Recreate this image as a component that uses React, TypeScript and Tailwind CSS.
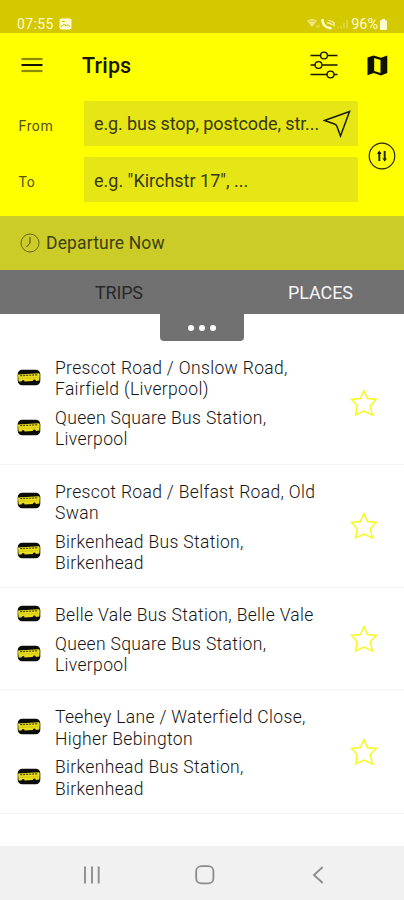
import React from "react";

const trips: { from: string[]; to: string[] }[] = [
  { from: ["Prescot Road / Onslow Road,", "Fairfield (Liverpool)"], to: ["Queen Square Bus Station,", "Liverpool"] },
  { from: ["Prescot Road / Belfast Road, Old", "Swan"], to: ["Birkenhead Bus Station,", "Birkenhead"] },
  { from: ["Belle Vale Bus Station, Belle Vale"], to: ["Queen Square Bus Station,", "Liverpool"] },
  { from: ["Teehey Lane / Waterfield Close,", "Higher Bebington"], to: ["Birkenhead Bus Station,", "Birkenhead"] },
];

function BusIcon() {
  return (
    <svg width="24" height="17" viewBox="0 0 24 17" className="block">
      <rect x="0.7" y="0.7" width="22.6" height="15.6" rx="4.5" fill="#0b0b08" />
      <path d="M1 5.4 L21.6 4.2 Q22.9 4.4 22.7 6 L22.3 11.4 L18.8 11.9 A1.5 1.5 0 0 0 15.8 12 L7.6 12.4 A1.5 1.5 0 0 0 4.6 12.4 L1.6 12.4 Z" fill="#ebdf1c" />
      <path d="M3.2 6.7 L20.5 5.8" stroke="#4a460c" strokeWidth="1.2" strokeDasharray="2 1" />
      <path d="M2.5 9.4 L21.5 8.6" stroke="#b8ad14" strokeWidth="0.5" />
    </svg>
  );
}

function Star() {
  return (
    <svg width="28" height="28" viewBox="0 0 28 28" fill="none" stroke="#f8f81e" strokeWidth="1.5" className="-mt-[3px] block">
      <path d="M14 1.8 L17.5 9.6 L26.2 10.4 L20.2 16.7 L22.4 26 L14 22 L5.6 26 L7.2 16.7 L1.5 10.4 L10.3 9.6 Z" />
    </svg>
  );
}

function Stop({ lines }: { lines: string[] }) {
  return (
    <div className="flex items-center">
      <div className="-mt-[4px] ml-[17px] w-[38px] shrink-0">
        <BusIcon />
      </div>
      <div>
        {lines.map((l) => (
          <div key={l} className="whitespace-nowrap">{l}</div>
        ))}
      </div>
    </div>
  );
}

export default function App() {
  return (
    <div className="flex h-[900px] w-[404px] flex-col overflow-hidden bg-white font-[Roboto,sans-serif]">
      <div className="flex h-[33px] shrink-0 items-end justify-between bg-[#d4c800] pr-[16px] pl-[17px] text-[#fffbd0]">
        <div className="flex h-[18px] items-center gap-[5px]">
          <span className="text-[14px] tracking-[0.35px]">07:55</span>
          <svg width="13" height="12" viewBox="0 0 13 12">
            <rect x="0.5" y="0.5" width="12" height="11" rx="2" fill="#fffbd0" />
            <path d="M2 9 L5 6 L7 8 L9 6.5 L11 9" fill="none" stroke="#d4c800" strokeWidth="1" />
            <path d="M3 3.5 H6" stroke="#d4c800" strokeWidth="1" />
          </svg>
        </div>
        <div className="flex h-[18px] items-center">
          <svg width="46" height="14" viewBox="0 0 46 14" fill="none">
            <path d="M0 4 Q5 0 10 4 L5 10 Z" fill="#eee58a" />
            <path d="M1.5 5 Q5 2.5 8.5 5" stroke="#d4c800" strokeWidth="0.8" />
            <path d="M10 8 V11 M12 8 V11" stroke="#eee58a" strokeWidth="0.8" />
            <path d="M15.5 3 Q15.8 10 23.5 11.2" stroke="#fffbd0" strokeWidth="2.6" strokeLinecap="round" />
            <path d="M20 6 Q23 5.5 25.5 8 M21.5 3.5 Q25 3.5 27.5 6 M27 5 V9.5" stroke="#fffbd0" strokeWidth="1.1" />
            <path d="M31 11.5 V9.5 M34 11.5 V8.5 M37 11.5 V6 M40 11.5 V3" stroke="#e6dd70" strokeWidth="1" />
          </svg>
          <span className="-ml-[2px] pt-px text-[14.5px] tracking-[-0.05px]">96%</span>
          <svg width="9" height="13" viewBox="0 0 9 13" className="ml-px">
            <path d="M3 1 H6 V2.2 H7 Q8 2.2 8 3.2 V11 Q8 12 7 12 H2 Q1 12 1 11 V3.2 Q1 2.2 2 2.2 H3 Z" fill="#fffbd0" />
          </svg>
        </div>
      </div>

      <div className="h-[183px] shrink-0 bg-[#ffff00]">
        <div className="flex h-[64px] items-center pl-[21px]">
          <svg width="22" height="18" viewBox="0 0 22 18" className="-mt-px">
            <path d="M0.5 3 H21.5" stroke="#8b8b00" strokeWidth="2.2" />
            <path d="M0.5 9 H21.5" stroke="#111100" strokeWidth="2" />
            <path d="M0.5 15 H21.5" stroke="#8b8b00" strokeWidth="2.2" />
          </svg>
          <div className="mt-[2px] ml-[39px] w-[228px] text-[21.5px] font-medium tracking-[0.15px] text-[#171700]">Trips</div>
          <svg width="28" height="28" viewBox="0 0 28 28" fill="none" stroke="#171700" strokeWidth="1.4">
            <path d="M0.5 4.5 H10.5 M17.5 4.5 H27.5 M0.5 14 H5 M12 14 H27.5 M0.5 23.5 H17 M24 23.5 H27.5" />
            <circle cx="14" cy="4.5" r="3.4" />
            <circle cx="8.5" cy="14" r="3.4" />
            <circle cx="20.5" cy="23.5" r="3.4" />
          </svg>
          <svg width="21" height="21" viewBox="0 0 21 21" className="ml-[29px]">
            <path d="M0.5 2.4 L6.7 0.5 L14 2.7 L20.3 0.5 V18 L14 20.5 L6.7 18 L0.5 20.3 Z" fill="#111100" />
            <path d="M7.2 3 L13.5 5 V18 L7.2 16 Z" fill="#ffff00" />
          </svg>
        </div>
        <div className="flex">
          <div className="flex flex-col gap-[11px] pt-[4px]">
            <div className="flex items-center">
              <span className="w-[84px] pt-[6px] pl-[18.5px] text-[14px] tracking-[0.6px] text-[#56560a]">From</span>
              <div className="flex h-[45px] w-[274px] items-center bg-[#e6e617] pl-[10px]">
                <span className="w-[229px] text-[18px] tracking-[-0.1px] whitespace-nowrap text-[#38380a]">e.g. bus stop, postcode, str...</span>
                <svg width="28" height="28" viewBox="0 0 28 28" fill="none" stroke="#1a1a00" strokeWidth="1.5">
                  <path d="M1.5 10.5 L26.5 1.5 L17.5 26 L14 16.5 Q13.5 14.8 11.5 14 Z" />
                </svg>
              </div>
            </div>
            <div className="flex items-center">
              <span className="w-[84px] pt-[6px] pl-[18.5px] text-[14px] tracking-[0.6px] text-[#56560a]">To</span>
              <div className="flex h-[45px] w-[274px] items-center bg-[#e6e617] pl-[10px]">
                <span className="pt-px text-[18px] whitespace-nowrap text-[#38380a]">e.g. "Kirchstr 17", ...</span>
              </div>
            </div>
          </div>
          <svg width="28" height="28" viewBox="0 0 28 28" className="mt-[45px] ml-[10px]" fill="none" stroke="#29290a">
            <circle cx="14" cy="14" r="12.8" strokeWidth="1.2" />
            <path d="M11.3 19 V10" strokeWidth="2" />
            <path d="M9 12 L11.3 8.5 L13.6 12 Z M14.4 16.5 L16.7 19.5 L19 16.5 Z" fill="#111100" stroke="none" />
            <path d="M16.7 9 V18" strokeWidth="2" />
          </svg>
        </div>
      </div>

      <div className="flex h-[54px] shrink-0 items-center bg-[#cccc28] pl-[20px]">
        <svg width="20" height="20" viewBox="0 0 20 20" fill="none" stroke="#66660f" strokeWidth="1">
          <circle cx="10" cy="10" r="9" />
          <path d="M10 4 V10 L6.5 14" stroke="#47470a" />
        </svg>
        <span className="ml-[6px] text-[17.5px] tracking-[0.15px] text-[#3e3e12]">Departure Now</span>
      </div>

      <div className="flex h-[44px] shrink-0 items-center bg-[#717171] text-[18px]">
        <div className="w-[193px] pl-[95px] tracking-[-0.2px] text-[#292929]">TRIPS</div>
        <div className="pl-[95px] tracking-[-0.1px] text-[#f6f6f6]">PLACES</div>
      </div>
      <div className="mx-auto flex h-[27px] w-[84px] shrink-0 items-center justify-center gap-[5px] rounded-b-[4px] bg-[#717171]">
        <span className="size-[6px] rounded-full bg-white" />
        <span className="size-[6px] rounded-full bg-white" />
        <span className="size-[6px] rounded-full bg-white" />
      </div>

      <div className="flex-1 text-[17.5px] leading-[21.25px] font-light tracking-[0.34px] text-[#141414]">
        {trips.map((t, i) => (
          <div key={i} className="flex items-center justify-between border-b border-[#f3f3f3] pt-[17px] pr-[26px] pb-[13px]">
            <div className="flex flex-col gap-[7.5px]">
              <Stop lines={t.from} />
              <Stop lines={t.to} />
            </div>
            <Star />
          </div>
        ))}
      </div>

      <div className="flex h-[54px] shrink-0 items-center bg-[#f1f1f1] pl-[83px]">
        <svg width="18" height="18" viewBox="0 0 18 18" className="mt-[3px]" stroke="#929292" strokeWidth="2">
          <path d="M2 0.5 V17.5 M9 0.5 V17.5 M15.7 0.5 V17.5" />
        </svg>
        <svg width="20" height="20" viewBox="0 0 20 20" className="mt-[3px] ml-[94px]" fill="none" stroke="#8b8b8b" strokeWidth="1.8">
          <rect x="1.2" y="1.2" width="17.2" height="17.2" rx="5" />
        </svg>
        <svg width="12" height="18" viewBox="0 0 12 18" className="mt-[3px] ml-[97px]" fill="none" stroke="#8b8b8b" strokeWidth="1.8">
          <path d="M10.7 1 L2 9 L10.7 17" />
        </svg>
      </div>
    </div>
  );
}
